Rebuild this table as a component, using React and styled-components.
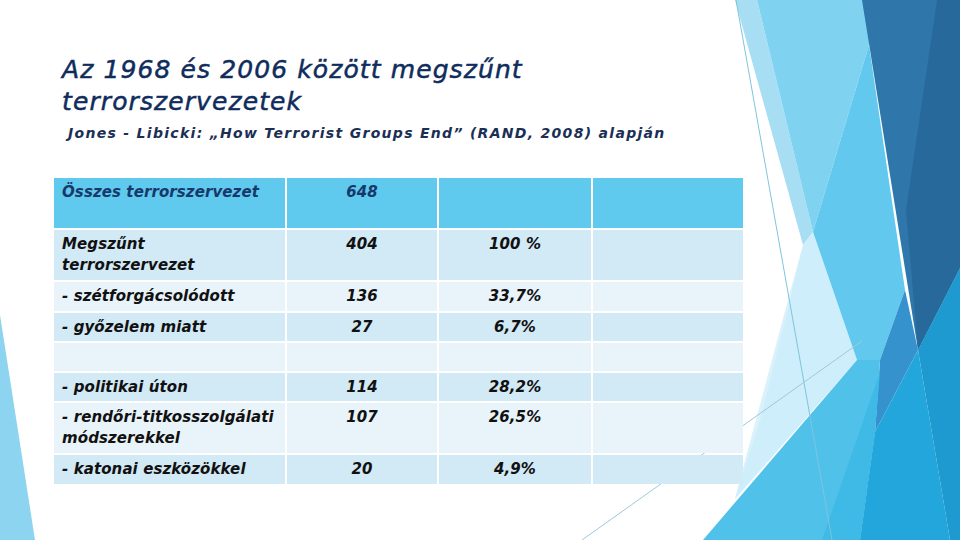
import React from "react";
import styled, { createGlobalStyle } from "styled-components";

const GlobalStyle = createGlobalStyle`
   html, body {
      margin: 0;
      padding: 0;
      background: #ffffff;
   }
   body {
      font-family: "DejaVu Sans", "Liberation Sans", sans-serif;
   }
`;

const rows = [
   { label: ["Összes terrorszervezet"], count: "648", pct: "", h: 50, tone: "head" },
   { label: ["Megszűnt", "terrorszervezet"], count: "404", pct: "100 %", h: 50, tone: "dark" },
   { label: ["- szétforgácsolódott"], count: "136", pct: "33,7%", h: 29, tone: "light" },
   { label: ["- győzelem miatt"], count: "27", pct: "6,7%", h: 28, tone: "dark" },
   { label: [], count: "", pct: "", h: 28, tone: "light" },
   { label: ["- politikai úton"], count: "114", pct: "28,2%", h: 28, tone: "dark" },
   { label: ["- rendőri-titkosszolgálati", "módszerekkel"], count: "107", pct: "26,5%", h: 50, tone: "light" },
   { label: ["- katonai eszközökkel"], count: "20", pct: "4,9%", h: 29, tone: "dark" },
];

const Facets = () => (
   <Deco viewBox="0 0 960 540" preserveAspectRatio="none">
      {/* left sliver */}
      <polygon points="0,315 35,540 0,540" fill="#8dd4f0" />

      {/* right facets */}
      <polygon points="735,0 757,0 813,232 803,245" fill="#a8def4" />
      <polygon points="757,0 869,0 869,45 813,232" fill="#7fd3f1" />
      <polygon points="803,245 813,232 857,360 735,499" fill="#cdeefa" />
      <polygon points="803,245 790,300 760,420 735,499 780,330" fill="#dcf2fb" />
      <polygon points="869,45 905,290 880,360 857,360 813,232" fill="#62c8ee" />
      <polygon points="862,0 960,0 960,268 918,350" fill="#2f77aa" />
      <polygon points="937,0 960,0 960,268 918,350 906,210" fill="#28699c" />
      <polygon points="905,290 918,350 875,432 880,360" fill="#3592cd" />
      <polygon points="703,540 857,360 880,360 875,432 860,540" fill="#50c2ea" />
      <polygon points="880,372 875,432 860,540 822,540" fill="#3fb9e6" />
      <polygon points="918,350 950,540 860,540 875,432" fill="#22a6dc" />
      <polygon points="918,350 960,268 960,540 950,540" fill="#1e9ad0" />

      {/* thin connector lines */}
      <line x1="736" y1="0" x2="832" y2="540" stroke="#7fc4de" strokeWidth="1" />
      <line x1="582" y1="540" x2="862" y2="341" stroke="#9dc9dc" strokeWidth="1" />
   </Deco>
);

const App = () => {
   return (
      <>
         <GlobalStyle />
         <Slide>
            <Facets />
            <Content>
               <Title>
                  Az 1968 és 2006 között megszűnt
                  <br />
                  terrorszervezetek
               </Title>
               <Subtitle>Jones - Libicki: „How Terrorist Groups End” (RAND, 2008) alapján</Subtitle>
               <Table>
                  {rows.map((r, i) => (
                     <Row key={i} $h={r.h}>
                        <Cell $tone={r.tone}>
                           {r.label.map((line, j) => (
                              <React.Fragment key={j}>
                                 {j > 0 && <br />}
                                 {line}
                              </React.Fragment>
                           ))}
                        </Cell>
                        <Cell $tone={r.tone} $center>
                           {r.count}
                        </Cell>
                        <Cell $tone={r.tone} $center>
                           {r.pct}
                        </Cell>
                        <Cell $tone={r.tone} />
                     </Row>
                  ))}
               </Table>
            </Content>
         </Slide>
      </>
   );
};

export default App;

const Slide = styled.div`
   position: relative;
   width: 960px;
   height: 540px;
   overflow: hidden;
   background: #ffffff;
`;

const Deco = styled.svg`
   position: absolute;
   inset: 0;
   width: 960px;
   height: 540px;
   z-index: 0;
`;

const Content = styled.div`
   position: relative;
   z-index: 1;
   display: flex;
   flex-direction: column;
   padding: 54px 0 0 54px;
`;

const Title = styled.h1`
   margin: 0 0 0 8px;
   font-family: "DejaVu Sans", sans-serif;
   font-style: italic;
   font-weight: 400;
   font-size: 25px;
   line-height: 32px;
   letter-spacing: 1.1px;
   color: #0f2c5d;
   -webkit-text-stroke: 0.5px #0f2c5d;
`;

const Subtitle = styled.p`
   margin: 5px 0 0 14px;
   font-family: "DejaVu Sans", sans-serif;
   font-style: italic;
   font-weight: 700;
   font-size: 14px;
   line-height: 20px;
   letter-spacing: 1.3px;
   color: #1b2f55;
`;

const Table = styled.div`
   display: flex;
   flex-direction: column;
   gap: 2px;
   margin-top: 35px;
   width: 689px;
`;

const Row = styled.div`
   display: grid;
   grid-template-columns: 231px 150px 152px 150px;
   gap: 2px;
   height: ${(p) => p.$h}px;
`;

const tones = {
   head: "#5fc9ee",
   dark: "#d2e9f6",
   light: "#e8f3fa",
};

const Cell = styled.div`
   background: ${(p) => tones[p.$tone]};
   padding: 4px 8px 0;
   font-family: "DejaVu Sans", sans-serif;
   font-style: italic;
   font-weight: 700;
   font-size: 15px;
   line-height: 21px;
   letter-spacing: 0.1px;
   color: ${(p) => (p.$tone === "head" ? "#17386a" : "#111111")};
   text-align: ${(p) => (p.$center ? "center" : "left")};
   white-space: nowrap;
`;
